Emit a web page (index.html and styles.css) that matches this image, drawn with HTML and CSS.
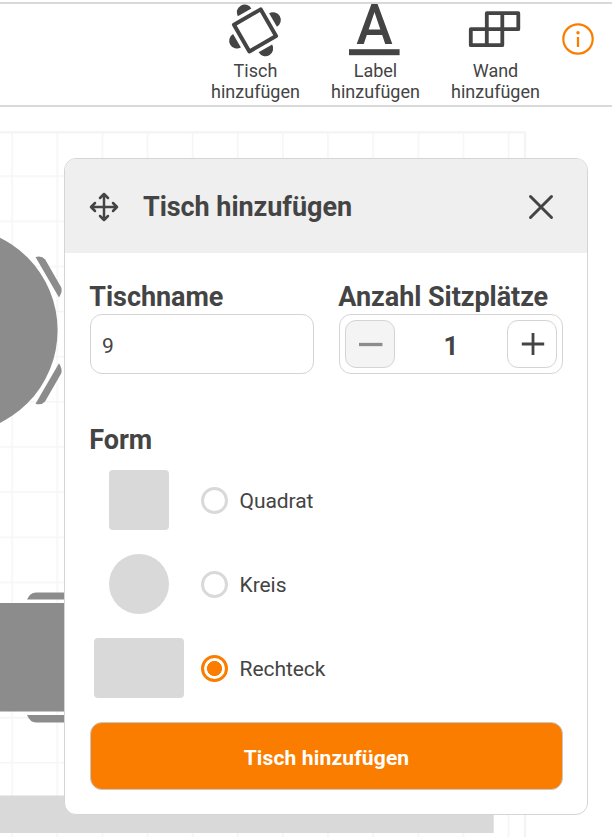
FILE: index.html
```html
<!DOCTYPE html>
<html lang="de">
<head>
  <meta charset="UTF-8" />
  <meta name="viewport" content="width=device-width, initial-scale=1.0" />
  <title>Tischplan</title>
  <link rel="stylesheet" href="styles.css">
</head>
<body>
  <header class="toolbar">
    <button class="tool">
      <svg class="tool-icon" width="60" height="58" viewBox="0 0 60 58">
        <g transform="translate(30 28.4) rotate(-30)" fill="#444">
          <rect x="-15.4" y="-15.4" width="30.8" height="30.8" fill="none" stroke="#444" stroke-width="4" stroke-linejoin="round" />
          <path d="M-7.8 -20.8a7.8 7.8 0 0 1 15.6 0z" />
          <path d="M-7.8 20.8a7.8 7.8 0 0 0 15.6 0z" />
          <path d="M-20.8 -7.8a7.8 7.8 0 0 0 0 15.6z" />
          <path d="M20.8 -7.8a7.8 7.8 0 0 1 0 15.6z" />
        </g>
      </svg>
      <span>Tisch<br>hinzufügen</span>
    </button>
    <button class="tool">
      <svg class="tool-icon" width="60" height="58" viewBox="0 0 60 58">
        <text class="letter" x="29.5" y="42" text-anchor="middle">A</text>
        <rect x="4" y="47.2" width="50.6" height="6" fill="#444" />
      </svg>
      <span>Label<br>hinzufügen</span>
    </button>
    <button class="tool">
      <svg class="tool-icon" width="60" height="58" viewBox="0 0 60 58">
        <path d="M21.8 11.2h31.5v16h-31.5zM5.8 27.2h31.5v16H5.8zM37.3 11.2v16M21.8 27.2v16" fill="none" stroke="#444" stroke-width="3.8" stroke-linejoin="round" />
      </svg>
      <span>Wand<br>hinzufügen</span>
    </button>
    <button class="info-btn" aria-label="Info">
      <svg width="32" height="32" viewBox="0 0 32 32">
        <circle cx="16" cy="16" r="14.7" fill="none" stroke="#fa7d00" stroke-width="2.2" />
        <circle cx="16" cy="9.8" r="1.7" fill="#fa7d00" />
        <path d="M16 14v10" stroke="#fa7d00" stroke-width="2.3" />
      </svg>
    </button>
  </header>

  <main class="plan">
    <svg class="plan-canvas" width="612" height="730" viewBox="0 107 612 730">
      <defs>
        <pattern id="grid" x="11.3" y="130.3" width="45.13" height="45.13" patternUnits="userSpaceOnUse">
          <path d="M.8 0v45.13M0 .8h45.13" stroke="#f5f5f5" stroke-width="1.5" />
        </pattern>
      </defs>
      <rect x="0" y="132" width="525" height="705" fill="url(#grid)" />
      <path d="M0 132.4h525V837" fill="none" stroke="#f4f4f4" stroke-width="2.4" />
      <rect x="0" y="795.5" width="493.7" height="37.5" fill="#d9d9d9" />

      <g fill="#8c8c8c">
        <circle cx="-45.6" cy="330.3" r="103.2" />
        <path d="M35.5 257q6-2 9.7 2.5L61 287q2 4-2 10.5z" />
        <path d="M35.5 403.7q6 2 9.7-2.5L61 373.7q2-4-2-10.5z" />
        <rect x="0" y="603" width="90" height="108.5" />
        <path d="M27 599.5q3-7 9-7h54v7zM27 715q3 7.5 9 7.5h54V715z" />
      </g>
    </svg>

    <form class="dialog">
      <div class="dialog-header">
        <svg width="30" height="30" viewBox="0 0 30 30" fill="none" stroke="#444" stroke-width="2.5" stroke-linecap="round" stroke-linejoin="round">
          <path d="M15 2.5v25M2.5 15h25M11 6l4-4 4 4M11 24l4 4 4-4M6 11l-4 4 4 4M24 11l4 4-4 4" />
        </svg>
        <h1>Tisch hinzufügen</h1>
        <button type="button" class="close-btn" aria-label="Schließen">
          <svg width="26" height="26" viewBox="0 0 26 26">
            <path d="M2.5 2.5l21 21M23.5 2.5l-21 21" stroke="#444" stroke-width="3" stroke-linecap="round" />
          </svg>
        </button>
      </div>

      <div class="dialog-body">
        <div class="fields">
          <div class="field">
            <label for="tischname">Tischname</label>
            <input type="text" id="tischname" class="box" value="9" />
          </div>
          <div class="field">
            <label>Anzahl Sitzplätze</label>
            <div class="box stepper">
              <button type="button" class="step-btn" disabled aria-label="Weniger">
                <svg width="26" height="26" viewBox="0 0 26 26"><path d="M2 13.5h23.4" stroke="#8c8c8c" stroke-width="3.3" /></svg>
              </button>
              <span>1</span>
              <button type="button" class="step-btn" aria-label="Mehr">
                <svg width="26" height="26" viewBox="0 0 26 26"><path d="M2.8 13h22.4M14 2v22" stroke="#444" stroke-width="2.8" /></svg>
              </button>
            </div>
          </div>
        </div>

        <h2>Form</h2>
        <label class="shape-row">
          <span class="preview"><i class="shape"></i></span>
          <input type="radio" name="form" />
          <span class="shape-name">Quadrat</span>
        </label>
        <label class="shape-row">
          <span class="preview"><i class="shape circle"></i></span>
          <input type="radio" name="form" />
          <span class="shape-name">Kreis</span>
        </label>
        <label class="shape-row">
          <span class="preview"><i class="shape wide"></i></span>
          <input type="radio" name="form" checked />
          <span class="shape-name">Rechteck</span>
        </label>

        <button type="button" class="submit-btn">Tisch hinzufügen</button>
      </div>
    </form>
  </main>
</body>
</html>
```

FILE: styles.css
```css
* {
  box-sizing: border-box;
}
body {
  margin: 0;
  height: 837px;
  overflow: hidden;
  background-color: white;
  font-family: Roboto, sans-serif;
  color: #444;
}
button {
  font-family: inherit;
  color: inherit;
  background: none;
  border: none;
  padding: 0;
  cursor: pointer;
}
svg {
  display: block;
}
.toolbar {
  display: flex;
  justify-content: flex-end;
  align-items: flex-start;
  height: 105px;
  margin-top: 2px;
  padding-right: 18px;
  border-top: 2px solid #d9d9d9;
  border-bottom: 2px solid #d9d9d9;
}
.tool {
  width: 120px;
  margin-top: -2px;
  display: flex;
  flex-direction: column;
  align-items: center;
  font-size: 18px;
  line-height: 21px;
}
.tool span {
  padding-left: 1px;
}
.tool-icon {
  overflow: visible;
}
.letter {
  font-size: 55px;
  font-weight: 500;
  fill: #444;
}
.info-btn {
  margin: 19px 0 0 7px;
}
.plan {
  position: relative;
  height: 730px;
}
.dialog {
  position: absolute;
  top: 51px;
  left: 64px;
  width: 524px;
  height: 657px;
  background-color: white;
  border: 1px solid #d4d6d6;
  border-radius: 12px;
  overflow: hidden;
}
.dialog-header {
  display: flex;
  align-items: center;
  height: 94px;
  padding: 1px 33px 0 24px;
  background-color: #efefef;
}
.dialog-header h1 {
  flex: 1;
  margin: 0 0 0 24px;
  padding-top: 1px;
  font-size: 27px;
  font-weight: bold;
  letter-spacing: -0.05px;
}
.dialog-body {
  padding: 28px 24px 0 25px;
}
.fields {
  display: flex;
  gap: 25px;
}
.field {
  flex: 1;
}
.field label,
h2 {
  display: block;
  margin: 0;
  font-size: 27px;
  line-height: 32px;
  font-weight: bold;
  letter-spacing: -0.05px;
  text-indent: -0.7px;
}
.box {
  width: 100%;
  height: 60px;
  margin-top: 1px;
  border: 1px solid #d4d4d4;
  border-radius: 12px;
}
input.box {
  display: block;
  padding: 3px 12px 0 11px;
  font-family: inherit;
  font-size: 21px;
  color: #444;
  background: white;
}
.stepper {
  display: flex;
  justify-content: space-between;
  align-items: center;
  padding: 0 5px;
  font-size: 26px;
  font-weight: bold;
}
.stepper span {
  padding-top: 3px;
}
.step-btn {
  display: flex;
  justify-content: center;
  align-items: center;
  width: 50px;
  height: 48px;
  border: 1px solid #d4d4d4;
  border-radius: 11px;
}
.step-btn:disabled {
  background-color: #f4f4f4;
}
h2 {
  margin: 50px 0 14px;
}
.shape-row {
  display: flex;
  align-items: center;
  height: 60px;
  margin: 0 0 24px -0.5px;
  font-size: 21px;
}
.shape-name {
  padding-top: 2px;
  letter-spacing: -0.05px;
}
.preview {
  display: flex;
  justify-content: center;
  width: 99px;
}
.shape {
  width: 60px;
  height: 60px;
  background-color: #d9d9d9;
  border-radius: 4px;
}
.circle {
  border-radius: 50%;
}
.wide {
  width: 90px;
}
.shape-row input {
  appearance: none;
  width: 27px;
  height: 27px;
  margin: 0 12px;
  border: 3px solid #d9d9d9;
  border-radius: 50%;
}
.shape-row input:checked {
  border-color: #fa7d00;
  background: radial-gradient(circle, #fa7d00 7.2px, white 7.8px);
}
.submit-btn {
  width: 473px;
  height: 68px;
  padding-top: 3px;
  border: 1px solid #c8c8c8;
  border-radius: 12px;
  background-color: #fa7d00;
  color: white;
  font-size: 21px;
  font-weight: bold;
  letter-spacing: 0.15px;
}
```
